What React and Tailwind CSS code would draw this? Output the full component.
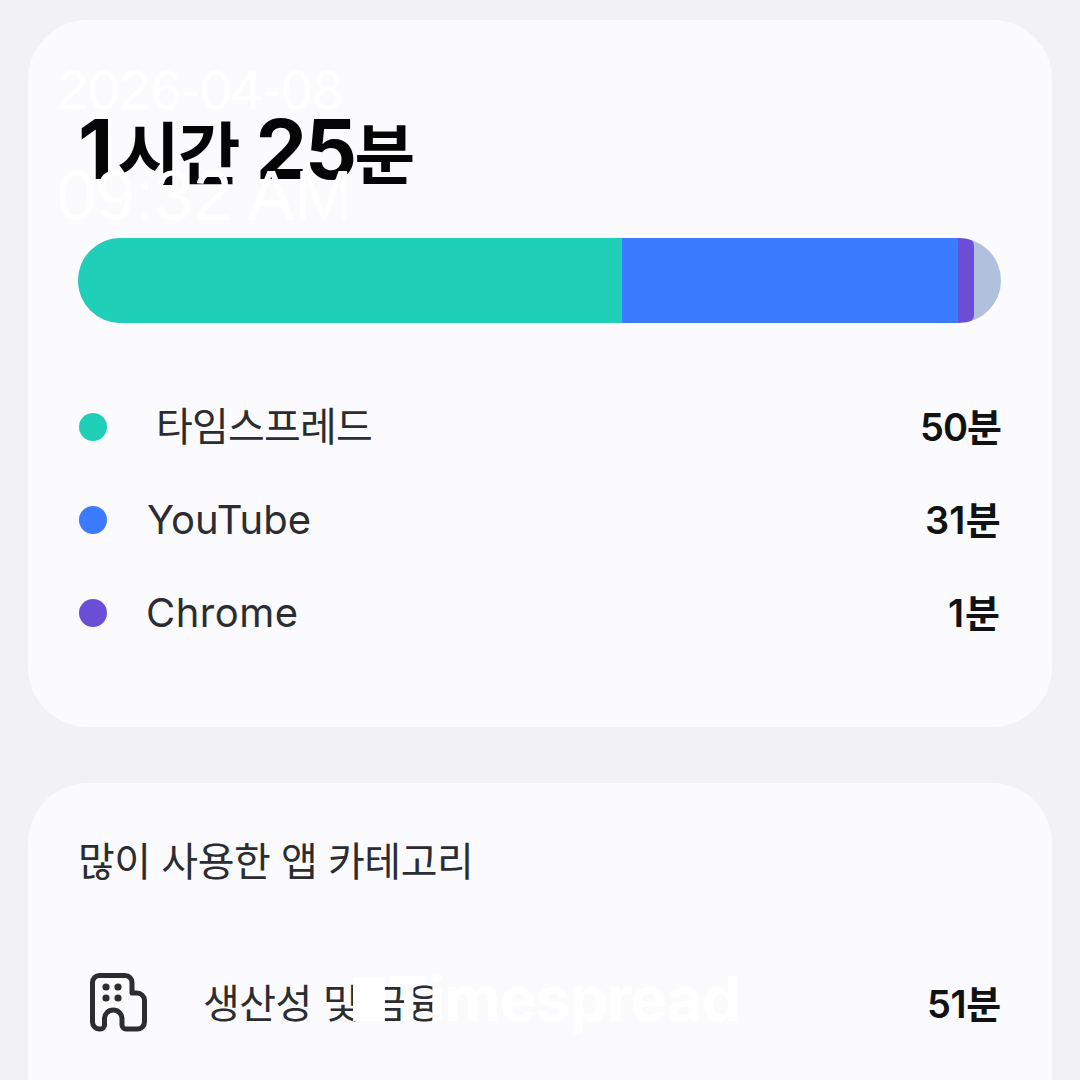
const sans = "font-['Inter','Noto_Sans_CJK_KR',sans-serif]";

const apps = [
  { name: "타임스프레드", time: "50분", dot: "bg-[#1fcfb8]", label: "pl-[49px] tracking-[-0.8px]", value: "tracking-[-1px]" },
  { name: "YouTube", time: "31분", dot: "bg-[#3b7bff]", label: "pl-[40px] tracking-[0px]", value: "tracking-[0.3px]" },
  { name: "Chrome", time: "1분", dot: "bg-[#6a4fd6]", label: "pl-[39px] tracking-[0.5px]", value: "tracking-[1px]" },
];

const BuildingIcon = () => (
  <svg width="57" height="59" viewBox="0 0 57 59" fill="none" stroke="#2b2d31" strokeWidth="5" strokeLinejoin="round">
    <path d="M2.5 9.5a7 7 0 0 1 7-7H35a7 7 0 0 1 7 7V20h5a7.5 7.5 0 0 1 7.5 7.5V49a7 7 0 0 1-7 7H36a4 4 0 0 1-4-4v-6.25a8.75 8.75 0 0 0-17.5 0V52a4 4 0 0 1-4 4h-1a7 7 0 0 1-7-7z" />
    <g fill="#2b2d31" stroke="none">
      <circle cx="16" cy="14" r="3.6" />
      <circle cx="28" cy="14" r="3.6" />
      <circle cx="16" cy="25" r="3.6" />
      <circle cx="28" cy="25" r="3.6" />
    </g>
  </svg>
);

const App = () => (
  <div className={`relative h-[1080px] overflow-hidden bg-[#f2f2f4] px-[28px] pt-[20px] ${sans}`}>
    <div className="h-[707px] rounded-[60px] bg-[#fbfbfe] px-[50px] pt-[86px]">
      <h1 className="flex h-[132px] items-baseline font-bold leading-[88px] text-[#050506]">
        <span className="text-[82px] tracking-[4px]">1</span>
        <span className="text-[68px] tracking-[-2px]">시간</span>
        <span className="ml-[17px] text-[82px] tracking-[-2.5px]">25</span>
        <span className="text-[66px]">분</span>
      </h1>
      <div className="flex h-[85px] w-[923px] overflow-hidden rounded-full bg-[#b1c0dc]">
        <div className="w-[544px] bg-[#1fcfb8]" />
        <div className="w-[336px] bg-[#3b7bff]" />
        <div className="w-[16px] rounded-r-[8px] bg-[#6a4fd6]" />
      </div>
      <ul className="mt-[81px] flex flex-col gap-[47px]">
        {apps.map((app) => (
          <li key={app.name} className="flex h-[46px] items-center">
            <span className={`ml-px h-[28px] w-[28px] rounded-full ${app.dot}`} />
            <span className={`flex-1 text-[40px] text-[#2b2d31] ${app.label}`}>{app.name}</span>
            <span className={`pr-px text-[38px] font-semibold text-[#111214] ${app.value}`}>{app.time}</span>
          </li>
        ))}
      </ul>
    </div>

    <div className="mt-[56px] h-[400px] rounded-[60px] bg-[#fbfbfe] px-[50px] pt-[55px]">
      <h2 className="text-[40px] leading-[48px] tracking-[-0.5px] text-[#2b2d31]">많이 사용한 앱 카테고리</h2>
      <div className="mt-[87px] flex h-[62px] items-center">
        <span className="pb-[4px] pl-[12px]"><BuildingIcon /></span>
        <span className="flex-1 pl-[56px] text-[40px] tracking-[-0.5px] text-[#2b2d31]">생산성 및 금융</span>
        <span className="pr-px text-[38px] font-semibold tracking-[-0.3px] text-[#111214]">51분</span>
      </div>
    </div>

    {/* white stamp laid over the page */}
    <div className="absolute left-[57px] top-[60px] font-['Liberation_Sans',sans-serif] text-[56px] leading-[60px] text-white">2026-04-08</div>
    <div className="absolute left-[57px] top-[158px] font-['Liberation_Sans',sans-serif] text-[70px] leading-[76px] text-white">09:32 AM</div>
    <div className="absolute left-[353px] top-[961px] flex items-center gap-[3px] font-['Inter',sans-serif] text-[62px] font-bold leading-[75px] tracking-[-1px] text-white">
      <span className="h-[44px] w-[32px] bg-white" />
      Timespread
    </div>
  </div>
);

export default App;
